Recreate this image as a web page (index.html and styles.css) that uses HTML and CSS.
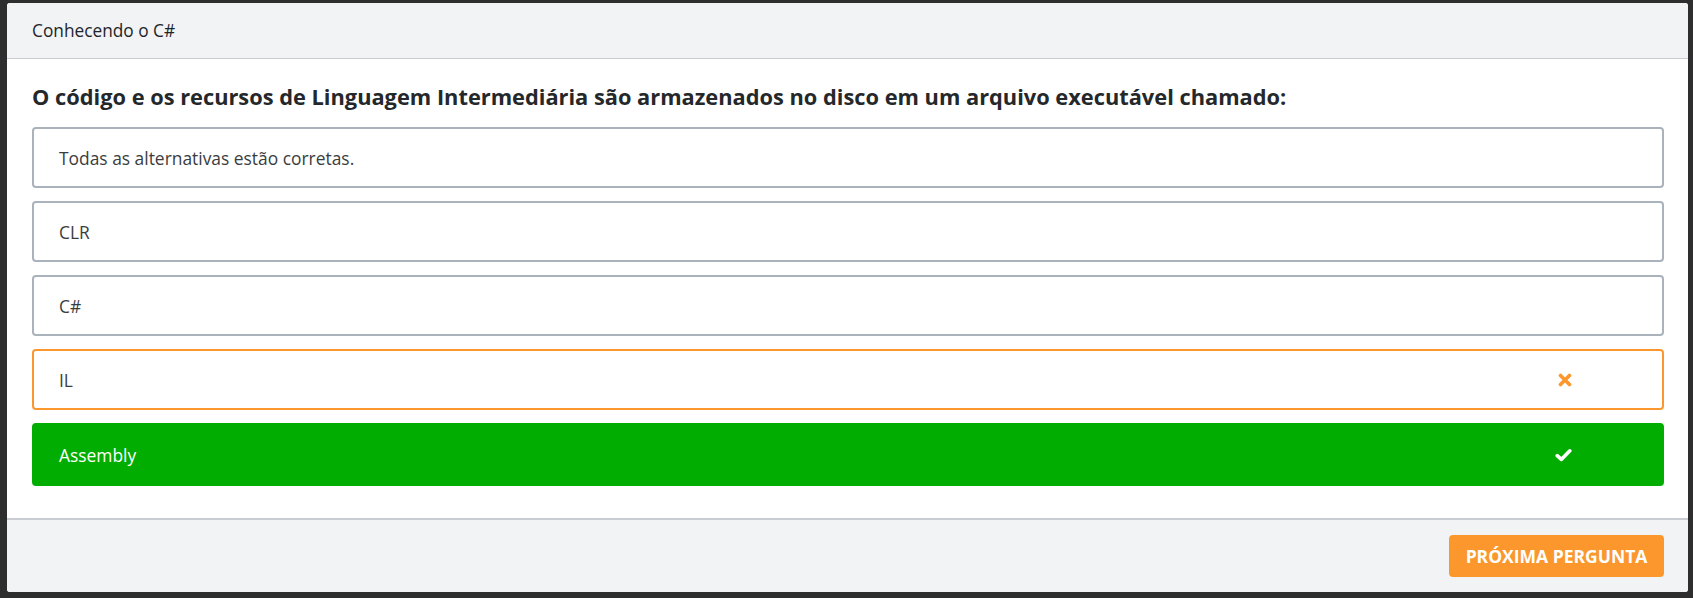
FILE: index.html
```html
<!DOCTYPE html>
<html lang="pt">
<head>
<meta charset="utf-8">
<link rel="stylesheet" href="styles.css">
</head>
<body>
<div class="modal">
  <div class="modal-header">Conhecendo o C#</div>
  <div class="modal-body">
    <h2 class="question">O código e os recursos de Linguagem Intermediária são armazenados no disco em um arquivo executável chamado:</h2>
    <div class="options">
      <div class="option"><span>Todas as alternativas estão corretas.</span></div>
      <div class="option"><span>CLR</span></div>
      <div class="option"><span>C#</span></div>
      <div class="option wrong"><span>IL</span>
        <svg class="icon" width="14" height="14" viewBox="0 0 14 14"><path d="M2.5 2.5 L11.5 11.5 M11.5 2.5 L2.5 11.5" stroke="#fb972d" stroke-width="3.6" stroke-linecap="round"/></svg>
      </div>
      <div class="option correct"><span>Assembly</span>
        <svg class="icon" width="17" height="14" viewBox="0 0 17 14"><path d="M2.2 7.6 L6.3 11.4 L14.8 2.8" fill="none" stroke="#ffffff" stroke-width="3.6" stroke-linecap="round" stroke-linejoin="round"/></svg>
      </div>
    </div>
  </div>
  <div class="modal-footer">
    <button class="btn-next">Próxima pergunta</button>
  </div>
</div>
</body>
</html>
```

FILE: styles.css
```css
html, body {
  margin: 0;
  padding: 0;
}
body {
  background: #2e2e2e;
  font-family: "Open Sans", "Noto Sans", sans-serif;
  color: #212529;
  height: 598px;
  overflow: hidden;
}
.modal {
  margin: 3px 5px 0 7px;
  height: 589px;
  background: #ffffff;
  border-radius: 3px;
  overflow: hidden;
  display: flex;
  flex-direction: column;
}
.modal-header {
  height: 56px;
  box-sizing: border-box;
  background: #f2f3f5;
  border-bottom: 1px solid #c9cdd2;
  padding: 0 25px;
  display: flex;
  align-items: center;
  font-size: 17.3px;
  color: #212529;
}
.modal-body {
  padding: 23px 24px 32px 25px;
}
.question {
  margin: 0 0 15px 0;
  font-size: 21.8px;
  line-height: 30px;
  font-weight: 700;
  color: #25282b;
}
.options {
  display: flex;
  flex-direction: column;
  gap: 13px;
}
.option {
  height: 61px;
  box-sizing: border-box;
  border: 2px solid #aab2bb;
  border-radius: 4px;
  padding: 0 90px 0 25px;
  display: flex;
  align-items: center;
  justify-content: space-between;
  font-size: 17.4px;
  color: #3a3d40;
}
.option.wrong {
  border-color: #fb972d;
}
.option.correct {
  height: 63px;
  background: #00ad00;
  border-color: #00ad00;
  color: #ffffff;
}
.icon {
  display: block;
}
.modal-footer {
  flex: 1;
  background: #f2f3f5;
  border-top: 2px solid #c9cdd2;
  padding: 15px 24px 0 0;
  display: flex;
  justify-content: flex-end;
  align-items: flex-start;
}
.btn-next {
  height: 42px;
  width: 215px;
  border: none;
  border-radius: 4px;
  background: #fb972d;
  color: #ffffff;
  font-family: "Open Sans", "Noto Sans", sans-serif;
  font-weight: 700;
  font-size: 17.5px;
  text-transform: uppercase;
  padding: 0;
}
```
